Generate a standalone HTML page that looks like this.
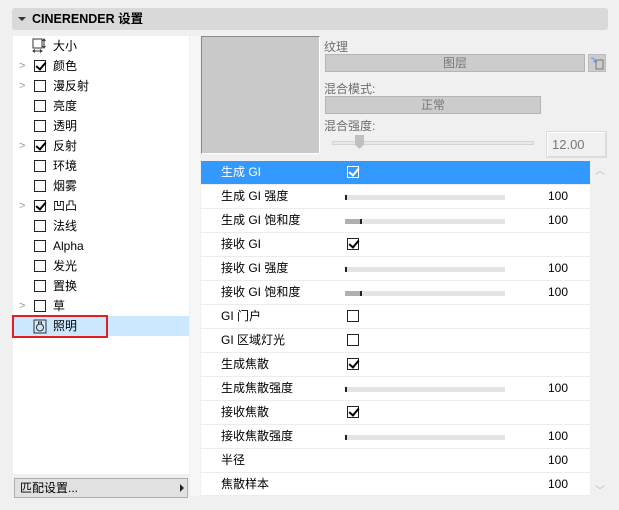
<!DOCTYPE html><html><head><meta charset="utf-8"><style>
*{box-sizing:border-box;margin:0;padding:0}
body{width:619px;height:510px;background:#f0f0f0;font-family:"Liberation Sans","Noto Sans CJK SC",sans-serif;font-size:12px;color:#000;position:relative;overflow:hidden}
.a{position:absolute}
.hdr{left:12px;top:8px;width:596px;height:22px;background:#d9d9d9;border-radius:3px;font-weight:bold;font-size:12.5px;line-height:22px;padding-left:20px}
.tri{left:18px;top:17px;width:0;height:0;border-left:4px solid transparent;border-right:4px solid transparent;border-top:4px solid #333}
.lp{left:13px;top:36px;width:176px;height:438px;background:#fff}
.li{position:absolute;left:0;width:176px;height:20px;line-height:20px}
.li .t{position:absolute;left:40px}
.cb{position:absolute;left:21px;top:4px;width:12px;height:12px;border:1px solid #222;background:#fff}
.ck::after{content:"";position:absolute;left:3px;top:-1px;width:4px;height:8px;border:solid #000;border-width:0 2px 2px 0;transform:rotate(40deg)}
.ar{position:absolute;left:6px;top:0;color:#999;font-size:11px}
.btn{left:14px;top:478px;width:174px;height:20px;background:#e1e1e1;border:1px solid #adadad;line-height:18px;padding-left:5px}
.prev{left:201px;top:36px;width:119px;height:118px;background:#c9c9c9;border:1px solid #888;border-right-color:#fff;border-bottom-color:#fff}
.lbl{color:#6d6d6d}
.fld{background:#cccccc;border:1px solid #b4b4b4;color:#777;text-align:center;line-height:16px}
.tbl{left:201px;top:161px;width:389px}
.r{position:relative;height:24px;border-bottom:1px solid #ececec;background:#fff;line-height:23px}
.r .t{position:absolute;left:20px}
.r .n{position:absolute;right:22px}
.sl{position:absolute;left:144px;top:10px;width:160px;height:5px;background:#e3e3e3}
.sl i{position:absolute;left:0;top:0;width:2px;height:5px;background:#222}
.sl b{position:absolute;left:0;top:0;width:16px;height:5px;background:#b0b0b0}
.r .cb{left:146px;top:5px}
.sel{background:#3399ff;color:#fff}
.sel .cb{border-color:#fff;background:#3399ff}
.sel .ck::after{border-color:#fff}
</style></head><body>
<div class="a hdr">CINERENDER 设置</div><div class="a tri"></div>
<div class="a lp">
<div class="li" style="top:0"><svg class="a" style="left:19px;top:2px" width="15" height="16"><rect x="1" y="1" width="9" height="9" fill="none" stroke="#333"/><path d="M12 1v9M10.5 3l1.5-2 1.5 2M10.5 8l1.5 2 1.5-2M1 13h9M3 11.5l-2 1.5 2 1.5M8 11.5l2 1.5-2 1.5" stroke="#333" fill="none"/></svg><span class="t">大小</span></div>
<div class="li" style="top:20px"><span class="ar">&gt;</span><span class="cb ck"></span><span class="t">颜色</span></div>
<div class="li" style="top:40px"><span class="ar">&gt;</span><span class="cb"></span><span class="t">漫反射</span></div>
<div class="li" style="top:60px"><span class="cb"></span><span class="t">亮度</span></div>
<div class="li" style="top:80px"><span class="cb"></span><span class="t">透明</span></div>
<div class="li" style="top:100px"><span class="ar">&gt;</span><span class="cb ck"></span><span class="t">反射</span></div>
<div class="li" style="top:120px"><span class="cb"></span><span class="t">环境</span></div>
<div class="li" style="top:140px"><span class="cb"></span><span class="t">烟雾</span></div>
<div class="li" style="top:160px"><span class="ar">&gt;</span><span class="cb ck"></span><span class="t">凹凸</span></div>
<div class="li" style="top:180px"><span class="cb"></span><span class="t">法线</span></div>
<div class="li" style="top:200px"><span class="cb"></span><span class="t">Alpha</span></div>
<div class="li" style="top:220px"><span class="cb"></span><span class="t">发光</span></div>
<div class="li" style="top:240px"><span class="cb"></span><span class="t">置换</span></div>
<div class="li" style="top:260px"><span class="ar">&gt;</span><span class="cb"></span><span class="t">草</span></div>
<div class="li" style="top:280px;background:#cce8ff"><svg class="a" style="left:20px;top:2px" width="14" height="16"><rect x="1" y="2" width="12" height="13" fill="none" stroke="#333"/><circle cx="7" cy="9.5" r="3.5" fill="none" stroke="#333"/><path d="M5.5 6V4h3v2" stroke="#333" fill="none"/></svg><span class="t">照明</span></div>
</div>
<div class="a" style="left:12px;top:315px;width:96px;height:23px;border:2px solid #e02020"></div>
<div class="a btn">匹配设置...<span style="position:absolute;right:3px;top:5px;border-left:4px solid #222;border-top:4px solid transparent;border-bottom:4px solid transparent"></span></div>
<div class="a" style="left:190px;top:36px;width:10px;height:460px;background:#f7f7f7"></div>
<div class="a prev"></div>
<div class="a lbl" style="left:324px;top:38px">纹理</div>
<div class="a fld" style="left:325px;top:54px;width:260px;height:18px">图层</div>
<div class="a" style="left:588px;top:54px;width:18px;height:18px;background:#ccc;border:1px solid #bbb"><svg width="16" height="16"><path d="M2 3q4 0 4 4l-2-1M6 7l2-1" stroke="#7aaaf0" stroke-width="1.5" fill="none"/><rect x="7" y="5" width="7" height="9" fill="none" stroke="#777"/></svg></div>
<div class="a lbl" style="left:324px;top:80px">混合模式:</div>
<div class="a fld" style="left:325px;top:96px;width:216px;height:18px">正常</div>
<div class="a lbl" style="left:324px;top:117px">混合强度:</div>
<div class="a" style="left:332px;top:141px;width:202px;height:4px;border:1px solid #d3d3d3;background:#e8e8e8"></div>
<div class="a" style="left:355px;top:135px;width:9px;height:14px;background:#c0c0c0;clip-path:polygon(0 0,100% 0,100% 70%,50% 100%,0 70%)"></div>
<div class="a" style="left:547px;top:132px;width:59px;height:25px;border:1px solid #dcdcdc;border-top-color:#fff;border-left-color:#fff;outline:1px solid #dcdcdc;color:#777;font-size:13px;line-height:23px;padding-left:4px">12.00</div>
<div class="a tbl">
<div class="r sel"><span class="t">生成 GI</span><span class="cb ck"></span></div>
<div class="r"><span class="t">生成 GI 强度</span><span class="sl"><i></i></span><span class="n">100</span></div>
<div class="r"><span class="t">生成 GI 饱和度</span><span class="sl"><b></b><i style="left:15px"></i></span><span class="n">100</span></div>
<div class="r"><span class="t">接收 GI</span><span class="cb ck"></span></div>
<div class="r"><span class="t">接收 GI 强度</span><span class="sl"><i></i></span><span class="n">100</span></div>
<div class="r"><span class="t">接收 GI 饱和度</span><span class="sl"><b></b><i style="left:15px"></i></span><span class="n">100</span></div>
<div class="r"><span class="t">GI 门户</span><span class="cb"></span></div>
<div class="r"><span class="t">GI 区域灯光</span><span class="cb"></span></div>
<div class="r"><span class="t">生成焦散</span><span class="cb ck"></span></div>
<div class="r"><span class="t">生成焦散强度</span><span class="sl"><i></i></span><span class="n">100</span></div>
<div class="r"><span class="t">接收焦散</span><span class="cb ck"></span></div>
<div class="r"><span class="t">接收焦散强度</span><span class="sl"><i></i></span><span class="n">100</span></div>
<div class="r"><span class="t">半径</span><span class="n">100</span></div>
<div class="r" style="height:23px"><span class="t">焦散样本</span><span class="n">100</span></div>
</div>
<div class="a" style="left:595px;top:162px;color:#bbb;font-size:10px">︿</div>
<div class="a" style="left:595px;top:482px;color:#bbb;font-size:10px">﹀</div>
</body></html>
